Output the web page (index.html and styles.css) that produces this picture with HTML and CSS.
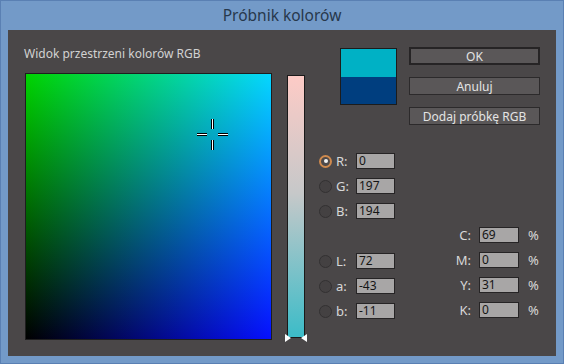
FILE: index.html
```html
<!DOCTYPE html>
<html lang="pl">
<head>
  <meta charset="UTF-8" />
  <title>Próbnik kolorów</title>
  <link rel="stylesheet" href="styles.css">
</head>
<body>
  <div class="window">
    <div class="titlebar">Próbnik kolorów</div>
    <div class="dialog">
      <div class="left">
        <div class="space-label">Widok przestrzeni kolorów RGB</div>
        <div class="field">
          <div class="cross"></div>
        </div>
      </div>

      <div class="slider">
        <span class="marker marker-left"></span>
        <span class="marker marker-right"></span>
      </div>

      <div class="right">
        <div class="top-row">
          <div class="swatch">
            <div class="swatch-new"></div>
            <div class="swatch-old"></div>
          </div>
          <div class="buttons">
            <button class="btn btn-default">OK</button>
            <button class="btn">Anuluj</button>
            <button class="btn">Dodaj próbkę RGB</button>
          </div>
        </div>

        <div class="fields">
          <div class="channels">
            <div class="group">
              <div class="row"><span class="radio checked"></span><span class="lbl">R:</span><span class="input">0</span></div>
              <div class="row"><span class="radio"></span><span class="lbl">G:</span><span class="input">197</span></div>
              <div class="row"><span class="radio"></span><span class="lbl">B:</span><span class="input">194</span></div>
            </div>
            <div class="group">
              <div class="row"><span class="radio"></span><span class="lbl">L:</span><span class="input">72</span></div>
              <div class="row"><span class="radio"></span><span class="lbl">a:</span><span class="input">-43</span></div>
              <div class="row"><span class="radio"></span><span class="lbl">b:</span><span class="input">-11</span></div>
            </div>
          </div>
          <div class="cmyk">
            <div class="row"><span class="lbl-r">C:</span><span class="input">69</span><span class="pct">%</span></div>
            <div class="row"><span class="lbl-r">M:</span><span class="input">0</span><span class="pct">%</span></div>
            <div class="row"><span class="lbl-r">Y:</span><span class="input">31</span><span class="pct">%</span></div>
            <div class="row"><span class="lbl-r">K:</span><span class="input">0</span><span class="pct">%</span></div>
          </div>
        </div>
      </div>
    </div>
  </div>
</body>
</html>
```

FILE: styles.css
```css
* { box-sizing: border-box; }
body {
  margin: 0;
  font-family: "Noto Sans", "Open Sans", sans-serif;
  background-color: #739ac8;
}

.window {
  width: 564px;
  height: 364px;
  border: 1px solid #5a80b3;
  padding: 0 7px 7px;
  display: flex;
  flex-direction: column;
}

.titlebar {
  height: 29px;
  line-height: 29px;
  text-align: center;
  font-size: 15.5px;
  color: #27384c;
}

.dialog {
  flex: 1;
  background-color: #4a4748;
  display: flex;
  align-items: flex-start;
  padding-left: 17px;
}

/* color field */
.left {
  width: 247px;
  margin-top: 16px;
}

.space-label {
  font-size: 12px;
  line-height: 15px;
  color: #d2d2d2;
  margin-left: -1px;
  margin-bottom: 12px;
}

.field {
  position: relative;
  height: 267px;
  border: 1px solid #1e1e1e;
  background-image: linear-gradient(to bottom, #00d400, #000000), linear-gradient(to right, #000000, #0610ff);
  background-blend-mode: screen;
}

.cross {
  position: absolute;
  left: 186px;
  top: 60px;
  width: 1px;
  height: 1px;
}

.cross::before,
.cross::after {
  content: "";
  position: absolute;
}

.cross::before {
  left: -1px;
  top: -15px;
  width: 3px;
  height: 31px;
  background:
    linear-gradient(to right, #000 0 1px, #fff 1px 2px, #000 2px) top / 3px 10px no-repeat,
    linear-gradient(to right, #000 0 1px, #fff 1px 2px, #000 2px) bottom / 3px 10px no-repeat;
}

.cross::after {
  left: -15px;
  top: -1px;
  width: 31px;
  height: 3px;
  background:
    linear-gradient(#000 0 1px, #fff 1px 2px, #000 2px) left / 10px 3px no-repeat,
    linear-gradient(#000 0 1px, #fff 1px 2px, #000 2px) right / 10px 3px no-repeat;
}

/* R slider */
.slider {
  position: relative;
  width: 18px;
  height: 263px;
  margin-left: 15px;
  margin-top: 45px;
  border: 1px solid #1a1a1a;
  background: linear-gradient(to bottom, #fdcbc6, #c6c8c9 45%, #3cbcc8);
}

.marker {
  position: absolute;
  bottom: -5px;
  width: 0;
  height: 0;
  border-top: 4px solid transparent;
  border-bottom: 4px solid transparent;
}

.marker-left {
  left: -3px;
  border-left: 6px solid #fff;
}

.marker-right {
  right: -3px;
  border-right: 6px solid #fff;
}

/* right part */
.right {
  margin-top: 17px;
  margin-left: 14px;
}

.top-row {
  display: flex;
  align-items: flex-start;
  margin-left: 21px;
}

.swatch {
  width: 57px;
  height: 57px;
  margin-top: 1px;
  border: 1px solid #1c1c1c;
  display: flex;
  flex-direction: column;
}

.swatch-new {
  flex: 1;
  background-color: #00b1c5;
}

.swatch-old {
  flex: 1;
  background-color: #003e7f;
}

.buttons {
  margin-left: 12px;
  display: flex;
  flex-direction: column;
  gap: 12px;
}

.btn {
  width: 131px;
  height: 18px;
  padding: 0;
  background-color: #5a5758;
  border: 1px solid #2c2a2b;
  color: #e4e4e4;
  font-family: "Noto Sans", "Open Sans", sans-serif;
  font-size: 12px;
  line-height: 15px;
}

.btn-default {
  border: 2px solid #262425;
}

.fields {
  display: flex;
  align-items: flex-start;
  margin-top: 28px;
}

.channels {
  display: flex;
  flex-direction: column;
  gap: 34px;
}

.group {
  display: flex;
  flex-direction: column;
  gap: 9px;
}

.row {
  display: flex;
  align-items: center;
  height: 16px;
  font-size: 12px;
  color: #d8d8d8;
}

.radio {
  position: relative;
  width: 13px;
  height: 13px;
  border-radius: 50%;
  border: 1px solid #333132;
  background-color: #444142;
}

.radio.checked {
  border: 2px solid #cf8a4e;
  background-color: #4e4a4a;
}

.radio.checked::after {
  content: "";
  position: absolute;
  left: 2.5px;
  top: 2.5px;
  width: 4px;
  height: 4px;
  border-radius: 50%;
  background-color: #f2f2f2;
}

.lbl {
  width: 20px;
  margin-left: 4px;
  font-size: 13px;
}

.input {
  width: 39px;
  height: 16px;
  line-height: 14px;
  padding-left: 2px;
  border: 1px solid #262425;
  background-color: #a8a6a6;
  color: #151515;
  font-size: 12px;
}

.cmyk {
  margin-left: 56px;
  margin-top: 74px;
  display: flex;
  flex-direction: column;
  gap: 9px;
}

.cmyk .input {
  width: 40px;
}

.lbl-r {
  width: 20px;
  margin-right: 8px;
  text-align: right;
  font-size: 13px;
}

.pct {
  margin-left: 9px;
  font-size: 13px;
}
```
